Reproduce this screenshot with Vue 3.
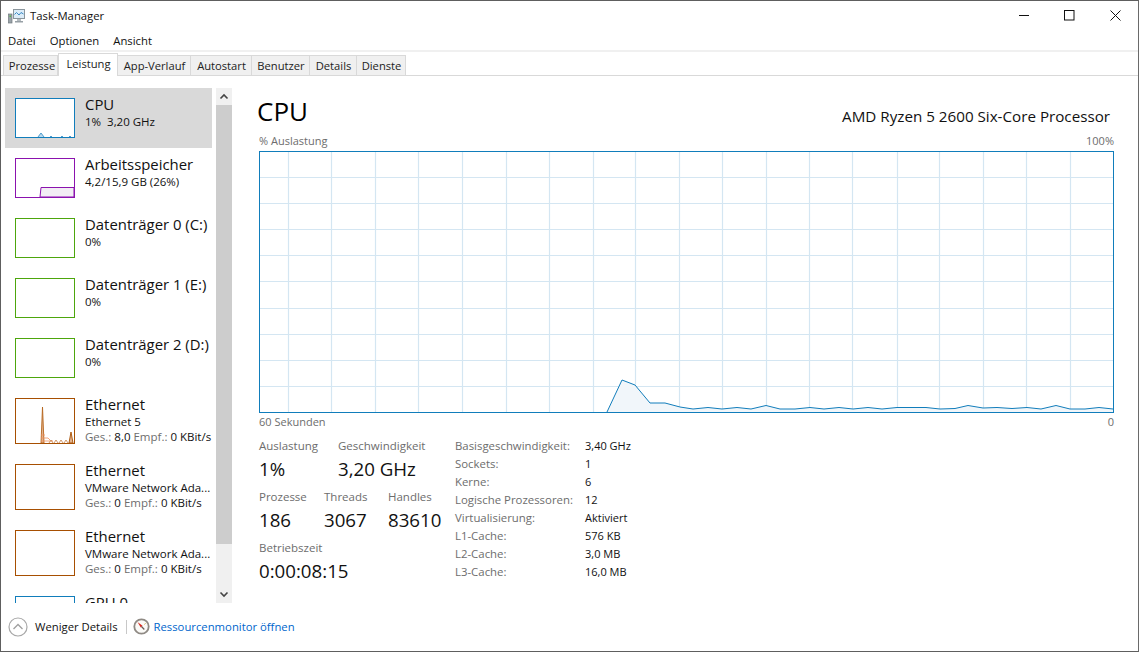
<script setup>
const tabs = [
  { label: 'Prozesse', width: 55 },
  { label: 'Leistung', width: 60, active: true },
  { label: 'App-Verlauf', width: 73 },
  { label: 'Autostart', width: 61 },
  { label: 'Benutzer', width: 58 },
  { label: 'Details', width: 47 },
  { label: 'Dienste', width: 49 },
]
const items = [
  { title: 'CPU', sub: '1%  3,20 GHz', color: 'blue', active: true, kind: 'cpu' },
  { title: 'Arbeitsspeicher', sub: '4,2/15,9 GB (26%)', color: 'purple', kind: 'mem' },
  { title: 'Datenträger 0 (C:)', sub: '0%', color: 'green' },
  { title: 'Datenträger 1 (E:)', sub: '0%', color: 'green' },
  { title: 'Datenträger 2 (D:)', sub: '0%', color: 'green' },
  { title: 'Ethernet', sub: 'Ethernet 5', ges: '8,0', color: 'orange', tall: true, kind: 'net' },
  { title: 'Ethernet', sub: 'VMware Network Ada...', ges: '0', color: 'orange', tall: true },
  { title: 'Ethernet', sub: 'VMware Network Ada...', ges: '0', color: 'orange', tall: true },
  { title: 'GPU 0', sub: '', color: 'blue' },
]
const vLines = [288, 331, 375, 418, 462, 506, 549, 593, 635, 679, 722, 766, 809, 852, 897, 939, 983, 1026, 1070].map(x => x - 260 + 0.5)
const hLines = [177, 203, 229, 255, 281, 308, 334, 360, 386].map(y => y - 152 + 0.5)
const raw = [
  [607, 412], [622, 380], [635, 385], [650, 403], [665, 403], [680, 407], [693, 409], [708, 407.5], [722, 409],
  [737, 407.5], [751, 409], [766, 405.5], [780, 409], [795, 409], [810, 407.5], [824, 409], [839, 407.5], [853, 409],
  [868, 407.5], [882, 409], [897, 407.5], [911, 407.5], [926, 407.5], [940, 409], [955, 408.5], [968, 405.5], [983, 408],
  [997, 407.5], [1012, 408.5], [1027, 407.5], [1041, 409], [1056, 405.5], [1070, 409], [1085, 409], [1099, 407.5], [1113, 409],
]
const pts = raw.map(([x, y]) => `${x - 260},${y - 152}`).join(' ')
const area = `${pts} 853,260 347,260`
const details = [
  ['Basisgeschwindigkeit:', '3,40 GHz'],
  ['Sockets:', '1'],
  ['Kerne:', '6'],
  ['Logische Prozessoren:', '12'],
  ['Virtualisierung:', 'Aktiviert'],
  ['L1-Cache:', '576 KB'],
  ['L2-Cache:', '3,0 MB'],
  ['L3-Cache:', '16,0 MB'],
]
</script>

<template>
  <div class="win">
    <header class="titlebar">
      <svg class="appicon" width="17" height="16" viewBox="0 0 17 16">
        <rect x="5.500" y="1.500" width="11" height="9" fill="#dcecf8" stroke="#8a959c" />
        <path d="M6.500 6.500l2-2 2.500 2.500 2-2.500 2.500 1.500" fill="none" stroke="#3b8ac4" />
        <rect x="9" y="11" width="4" height="2" fill="#b5bcc1" />
        <rect x="7" y="13" width="8" height="1.500" fill="#97a0a6" />
        <rect x="0.500" y="6" width="3.500" height="9" fill="#9aa3a9" stroke="#6f787e" stroke-width="0.700" />
        <rect x="1.500" y="7.500" width="1.500" height="1.500" fill="#54b948" />
      </svg>
      <span class="apptitle">Task-Manager</span>
      <div class="winbtns">
        <svg width="11" height="11" viewBox="0 0 11 11"><path d="M1 5.500h10" stroke="#111" fill="none" /></svg>
        <svg width="11" height="11" viewBox="0 0 11 11"><rect x="0.500" y="0.500" width="9.500" height="9.500" stroke="#111" fill="none" /></svg>
        <svg width="11" height="11" viewBox="0 0 11 11"><path d="M0.500 0.500l10 10M10.500 0.500l-10 10" stroke="#111" fill="none" /></svg>
      </div>
    </header>
    <nav class="menu">
      <span>Datei</span><span>Optionen</span><span>Ansicht</span>
    </nav>
    <div class="tabs">
      <div
        v-for="t in tabs"
        :key="t.label"
        class="tab"
        :class="{ active: t.active }"
        :style="{ width: t.width + 'px' }"
      >{{ t.label }}</div>
    </div>
    <div class="body">
      <aside class="side">
        <div class="list">
          <div v-for="(it, i) in items" :key="i" class="item" :class="{ active: it.active, tall: it.tall }">
            <div class="thumb" :class="it.color">
              <svg v-if="it.kind === 'cpu'" viewBox="0 0 58 38" preserveAspectRatio="none">
                <path d="M22 38l3-4 3 4M34 38l1-1 1 1M45 38l1-1 1 1M53 38l1-1 1 1" fill="#bcd9ec" stroke="#4f9ccd" />
              </svg>
              <svg v-else-if="it.kind === 'mem'" viewBox="0 0 58 38" preserveAspectRatio="none">
                <path d="M24 38l1-9.500h33V38z" fill="#f2edf4" stroke="#8b12ae" />
              </svg>
              <svg v-else-if="it.kind === 'net'" viewBox="0 0 58 44" preserveAspectRatio="none">
                <path d="M25 44l1.500-36 1.500 36z" fill="#e3b48f" stroke="#b5651d" stroke-width="0.900" />
                <path d="M25 36h4M25 39h7l2 2M25 42h12" fill="none" stroke="#f0905a" stroke-width="0.800" />
                <path d="M33 44l2-3 2 3M38 44l2-3 2 3M43 44l2-3 2 3M48 44l2-3 2 3" fill="none" stroke="#c77f45" stroke-width="0.800" />
                <path d="M53 44l2-11 2 11z" fill="#e3b48f" stroke="#a74f01" stroke-width="0.900" />
              </svg>
            </div>
            <div class="meta">
              <div class="ititle">{{ it.title }}</div>
              <div class="isub">{{ it.sub }}</div>
              <div v-if="it.ges" class="inet">
                <span class="g">Ges.:</span> {{ it.ges }} <span class="g">Empf.:</span> 0 KBit/s
              </div>
            </div>
          </div>
        </div>
        <div class="scroll">
          <div class="arrow">
            <svg width="10" height="7" viewBox="0 0 10 7"><path d="M1.500 5.500L5 2l3.500 3.500" stroke="#444" stroke-width="1.600" fill="none" /></svg>
          </div>
          <div class="track"><div class="sthumb"></div></div>
          <div class="arrow">
            <svg width="10" height="7" viewBox="0 0 10 7"><path d="M1.500 1.500L5 5l3.500-3.500" stroke="#444" stroke-width="1.600" fill="none" /></svg>
          </div>
        </div>
      </aside>
      <main class="main">
        <div class="head">
          <h1>CPU</h1>
          <div class="model">AMD Ryzen 5 2600 Six-Core Processor</div>
        </div>
        <div class="caprow top"><span>% Auslastung</span><span>100%</span></div>
        <div class="chart">
          <svg width="853" height="260" viewBox="0 0 853 260">
            <line v-for="x in vLines" :key="'v' + x" :x1="x" :x2="x" y1="0" y2="260" class="grid" />
            <line v-for="y in hLines" :key="'h' + y" :y1="y" :y2="y" x1="0" x2="853" class="grid" />
            <polygon :points="area" fill="#f1f6fa" />
            <polyline :points="pts" fill="none" stroke="#117dbb" stroke-width="1" />
          </svg>
        </div>
        <div class="caprow under"><span>60 Sekunden</span><span>0</span></div>
        <div class="stats">
          <div class="left">
            <div class="srow">
              <div class="st w79"><div class="lab">Auslastung</div><div class="val">1%</div></div>
              <div class="st"><div class="lab">Geschwindigkeit</div><div class="val">3,20 GHz</div></div>
            </div>
            <div class="srow">
              <div class="st w65"><div class="lab">Prozesse</div><div class="val">186</div></div>
              <div class="st w64"><div class="lab">Threads</div><div class="val">3067</div></div>
              <div class="st"><div class="lab">Handles</div><div class="val">83610</div></div>
            </div>
            <div class="srow">
              <div class="st"><div class="lab">Betriebszeit</div><div class="val">0:00:08:15</div></div>
            </div>
          </div>
          <dl class="dets">
            <template v-for="d in details" :key="d[0]">
              <dt>{{ d[0] }}</dt><dd>{{ d[1] }}</dd>
            </template>
          </dl>
        </div>
      </main>
    </div>
    <footer class="foot">
      <svg width="20" height="20" viewBox="0 0 20 20"><circle cx="10" cy="10" r="9" fill="#fff" stroke="#a8a8a8" stroke-width="1.200" /><path d="M5.500 12L10 7.500l4.500 4.500" fill="none" stroke="#a0a0a0" stroke-width="1.300" /></svg>
      <span class="less">Weniger Details</span>
      <span class="sep"></span>
      <svg width="17" height="17" viewBox="0 0 17 17"><circle cx="8.500" cy="8.500" r="7.200" fill="#fbfaf7" stroke="#8f8a84" stroke-width="1.800" /><path d="M4.500 4l5 3.800-1.700 1.700z" fill="#d8261c" /><path d="M8.500 8.500l2.800 3" stroke="#6a5a54" stroke-width="1.200" /><path d="M12.500 5.500l-1 .8" stroke="#c9a227" /></svg>
      <span class="link">Ressourcenmonitor öffnen</span>
    </footer>
  </div>
</template>

<style>
html, body { margin: 0; overflow: hidden; background: #fff; }
</style>

<style scoped>
.win {
  width: 1139px; height: 652px; box-sizing: border-box;
  border: 1px solid #5e5e5e; border-right-color: #6a6a6a;
  background: #fff; display: flex; flex-direction: column; overflow: hidden;
  font-family: "Open Sans", "Noto Sans", sans-serif; font-size: 11.300px; color: #111;
}
.titlebar { height: 29px; display: flex; align-items: center; padding-left: 7px; flex: none; }
.appicon { margin-right: 5px; }
.apptitle { font-size: 11.300px; }
.winbtns { margin-left: auto; display: flex; gap: 35px; padding-right: 17px; }
.menu { height: 20px; display: flex; gap: 14px; align-items: center; padding-left: 7px; flex: none; border-bottom: 2px solid #f0f0f0; box-sizing: content-box; }
.tabs { height: 22px; margin-top: 1px; padding-left: 2px; display: flex; align-items: flex-end; border-bottom: 1px solid #d9d9d9; flex: none; }
.tab {
  height: 20px; box-sizing: border-box; background: #f0f0f0; border: 1px solid #d9d9d9; border-bottom: 0; border-left: 0;
  display: flex; align-items: center; justify-content: center; flex: none; color: #222; line-height: 1; font-size: 11.200px; padding-left: 1px;
}
.tab:first-child { border-left: 1px solid #d9d9d9; padding-left: 3px; }
.tab.active { height: 23px; background: #fff; border-left: 1px solid #d9d9d9; margin-bottom: -1px; padding-bottom: 3px; }
.body { flex: 1; min-height: 0; display: flex; padding-top: 12px; }
.side { width: 231px; flex: none; display: flex; padding-left: 4px; box-sizing: border-box; height: 515px; }
.list { width: 207px; overflow: hidden; flex: none; }
.item { height: 60px; display: flex; padding: 10px 0 0 10px; box-sizing: border-box; }
.item.tall { height: 66px; }
.item.active { background: #d9d9d9; }
.thumb { width: 60px; height: 40px; box-sizing: border-box; border: 1px solid; background: #fff; flex: none; overflow: hidden; }
.tall .thumb { height: 46px; }
.thumb svg { display: block; width: 100%; height: 100%; }
.blue { border-color: #117dbb; }
.purple { border-color: #8b12ae; }
.green { border-color: #4da60c; }
.orange { border-color: #a74f01; }
.meta { margin-left: 10px; white-space: nowrap; margin-top: -3px; }
.ititle { font-size: 14.900px; line-height: 19px; }
.isub { font-size: 11.500px; line-height: 16px; white-space: pre; }
.inet { font-size: 11.500px; line-height: 14px; }
.g { color: #6d6d6d; }
.scroll { width: 16px; margin-left: 4px; display: flex; flex-direction: column; background: #f0f0f0; flex: none; }
.arrow { height: 17px; display: flex; align-items: center; justify-content: center; flex: none; }
.track { flex: 1; }
.sthumb { height: 439px; background: #cdcdcd; }
.main { flex: 1; padding-left: 25px; padding-right: 24px; min-width: 0; }
.head { display: flex; justify-content: space-between; align-items: flex-end; height: 41px; padding-right: 4px; }
h1 { font-size: 26px; font-weight: 400; margin: 0; line-height: 36px; color: #000; }
.model { font-size: 15.200px; line-height: 20px; margin-bottom: 3px; color: #111; }
.caprow { display: flex; justify-content: space-between; color: #6d6d6d; font-size: 11px; line-height: 16px; padding-left: 2px; }
.caprow.top { margin-top: 4px; margin-bottom: 2px; }
.caprow.under { margin-top: 1px; }
.chart { margin-left: 2px; width: 855px; height: 262px; box-sizing: border-box; border: 1px solid #117dbb; }
.chart svg { display: block; }
.grid { stroke: #d4e6f2; stroke-width: 1.200; }
.stats { display: flex; padding-left: 2px; margin-top: 8px; }
.left { width: 196px; flex: none; }
.srow { display: flex; height: 51px; }
.st { flex: none; }
.w79 { width: 79px; }
.w65 { width: 65px; }
.w64 { width: 64px; }
.lab { color: #6d6d6d; font-size: 11.500px; line-height: 16px; }
.val { font-size: 18.700px; line-height: 30px; color: #111; }
.dets { margin: 0; display: grid; grid-template-columns: 130px auto; grid-auto-rows: 18px; line-height: 16px; font-size: 11px; }
dt { color: #6d6d6d; font-size: 11.400px; }
dd { margin: 0; color: #111; }
.foot { height: 47px; flex: none; display: flex; align-items: center; padding: 0 0 2px 7px; box-sizing: border-box; }
.less { margin-left: 7px; }
.sep { width: 1px; height: 14px; background: #c8c8c8; margin: 0 6px 0 8px; }
.link { color: #0066cc; margin-left: 4px; }
</style>
